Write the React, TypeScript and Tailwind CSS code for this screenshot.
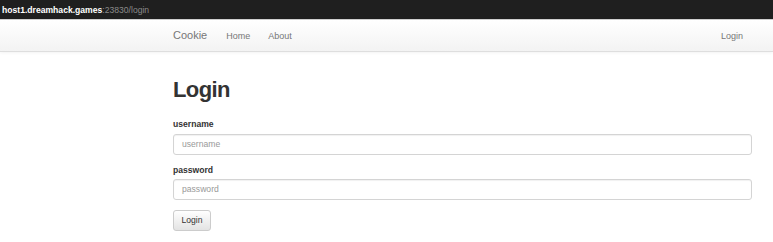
export default function App() {
  return (
    <div className="w-[773px] h-[242px] bg-white overflow-hidden" style={{ fontFamily: '"Liberation Sans", Arial, sans-serif' }}>
      <div className="h-[19px] bg-[#1f1f1f] flex items-center pl-[2px] text-[9px] leading-[10px]">
        <span className="text-white font-bold text-[8.6px]">host1.dreamhack.games</span>
        <span className="text-[#8a8a8a] text-[8.6px]">:23830/login</span>
      </div>
      <div className="h-[33px] border-t border-b border-t-[#cfcfcf] border-b-[#dedede] bg-gradient-to-b from-white to-[#f3f3f3] shadow-[0_1px_3px_rgba(0,0,0,0.05)]">
        <div className="flex items-baseline pl-[173px] pr-[30px] pt-[10px]">
          <span className="text-[11px] leading-[11px] text-[#777777]">Cookie</span>
          <span className="ml-[19px] text-[9px] leading-[10px] text-[#777777]">Home</span>
          <span className="ml-[18px] text-[9px] leading-[10px] text-[#777777]">About</span>
          <span className="ml-auto text-[9px] leading-[10px] text-[#777777]">Login</span>
        </div>
      </div>
      <div className="pl-[173px] pr-[21px]">
        <h1 className="mt-[27px] text-[22px] leading-[22px] font-bold tracking-[-0.6px] text-[#333]">Login</h1>
        <div className="mt-[18px] text-[8.6px] leading-[10px] font-bold text-[#333]">username</div>
        <div className="mt-[5px] h-[21px] border border-[#d4d4d4] rounded-[3px] shadow-[inset_0_1px_1px_rgba(0,0,0,0.06)] flex items-center pl-[8px] text-[8.6px] text-[#999]">username</div>
        <div className="mt-[10px] text-[8.6px] leading-[10px] font-bold text-[#333]">password</div>
        <div className="mt-[4px] h-[21px] border border-[#d4d4d4] rounded-[3px] shadow-[inset_0_1px_1px_rgba(0,0,0,0.06)] flex items-center pl-[8px] text-[8.6px] text-[#999]">password</div>
        <div className="mt-[10px] w-[38px] h-[21px] border border-[#cccccc] rounded-[3px] bg-gradient-to-b from-white to-[#e3e3e3] flex items-center justify-center text-[8.6px] text-[#333]">Login</div>
      </div>
    </div>
  );
}
